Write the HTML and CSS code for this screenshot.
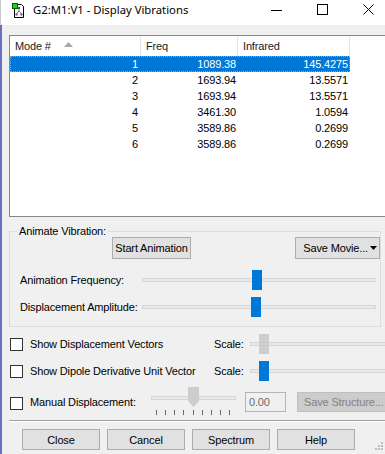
FILE: index.html
```html
<!DOCTYPE html>
<html>
<head>
<meta charset="utf-8">
<link rel="stylesheet" href="styles.css">
</head>
<body>
<div class="window">
  <div class="titlebar">
    <svg class="appicon" width="14" height="17" viewBox="0 0 14 17">
      <path d="M3.5 2.5 H10.5 L12.5 4.5 V15.5 H3.5 Z" fill="#fff" stroke="#000"/>
      <path d="M8 6 V9 M8 9 L5.5 12 M8 9 L10.5 12" stroke="#7a7a7a" stroke-width="1" fill="none"/>
      <rect x="7" y="5" width="2" height="2" fill="#555"/>
      <rect x="4.5" y="11.5" width="2" height="2" fill="#555"/>
      <rect x="9.5" y="11.5" width="2" height="2" fill="#555"/>
      <rect x="1.5" y="1.5" width="5" height="5" fill="#19d219" stroke="#0a5a0a"/>
    </svg>
    <span class="title">G2:M1:V1 - Display Vibrations</span>
    <div class="caption">
      <div class="cbtn"><svg width="11" height="11" viewBox="0 0 11 11"><path d="M0 6.5 H11" stroke="#000"/></svg></div>
      <div class="cbtn"><svg width="11" height="11" viewBox="0 0 11 11"><rect x="0.5" y="0.5" width="10" height="10" fill="none" stroke="#000"/></svg></div>
      <div class="cbtn"><svg width="11" height="11" viewBox="0 0 11 11"><path d="M0.5 0.5 L10.5 10.5 M10.5 0.5 L0.5 10.5" stroke="#000"/></svg></div>
    </div>
  </div>

  <div class="client">
    <div class="listview">
      <div class="lv-header">
        <div class="hcell c1">Mode #<svg class="sortarrow" width="9" height="5" viewBox="0 0 9 5"><path d="M0 5 L4.5 0 L9 5 Z" fill="#a8a8a8"/></svg></div>
        <div class="hcell c2">Freq</div>
        <div class="hcell c3">Infrared</div>
      </div>
      <div class="lv-row selected"><span class="c1">1</span><span class="c2">1089.38</span><span class="c3">145.4275</span></div>
      <div class="lv-row"><span class="c1">2</span><span class="c2">1693.94</span><span class="c3">13.5571</span></div>
      <div class="lv-row"><span class="c1">3</span><span class="c2">1693.94</span><span class="c3">13.5571</span></div>
      <div class="lv-row"><span class="c1">4</span><span class="c2">3461.30</span><span class="c3">1.0594</span></div>
      <div class="lv-row"><span class="c1">5</span><span class="c2">3589.86</span><span class="c3">0.2699</span></div>
      <div class="lv-row"><span class="c1">6</span><span class="c2">3589.86</span><span class="c3">0.2699</span></div>
    </div>

    <fieldset class="group">
      <legend>Animate Vibration:</legend>
      <div class="grp-buttons">
        <button class="btn btn-start">Start Animation</button>
        <button class="btn btn-movie">Save Movie...<svg class="dd" width="7" height="4" viewBox="0 0 7 4"><path d="M0 0 H7 L3.5 4 Z" fill="#000"/></svg></button>
      </div>
      <div class="slider-row">
        <span class="slider-label">Animation Frequency:</span>
        <div class="slider wide"><div class="track"></div><div class="thumb" style="left:110px"></div></div>
      </div>
      <div class="slider-row second">
        <span class="slider-label">Displacement Amplitude:</span>
        <div class="slider wide"><div class="track"></div><div class="thumb" style="left:109px"></div></div>
      </div>
    </fieldset>

    <div class="opt-row first">
      <div class="checkbox"></div>
      <span>Show Displacement Vectors</span>
      <span>Scale:</span>
      <div class="slider scale"><div class="track"></div><div class="thumb grey" style="left:9px"></div></div>
    </div>
    <div class="opt-row">
      <div class="checkbox"></div>
      <span>Show Dipole Derivative Unit Vector</span>
      <span>Scale:</span>
      <div class="slider scale"><div class="track"></div><div class="thumb" style="left:9px"></div></div>
    </div>

    <div class="manual-row">
      <div class="checkbox m-check"></div>
      <span class="m-label">Manual Displacement:</span>
      <div class="tickslider">
        <div class="ts-track"></div>
        <div class="ticks"><i></i><i></i><i></i><i></i><i></i><i></i><i></i><i></i><i></i></div>
        <svg class="ts-thumb" style="left:37px" width="11" height="20" viewBox="0 0 11 20"><path d="M0 0 H11 V14 L5.5 20 L0 14 Z" fill="#cdcdcd"/></svg>
      </div>
      <div class="textbox">0.00</div>
      <button class="btn btn-disabled">Save Structure...</button>
    </div>

    <div class="separator"></div>

    <div class="bottom-buttons">
      <button class="btn btn-bottom">Close</button>
      <button class="btn btn-bottom">Cancel</button>
      <button class="btn btn-bottom">Spectrum</button>
      <button class="btn btn-bottom">Help</button>
    </div>

    <svg class="grip" width="9" height="9" viewBox="0 0 9 9">
      <rect x="6" y="0" width="2" height="2" fill="#bcbcbc"/>
      <rect x="3" y="3" width="2" height="2" fill="#bcbcbc"/>
      <rect x="6" y="3" width="2" height="2" fill="#bcbcbc"/>
      <rect x="0" y="6" width="2" height="2" fill="#bcbcbc"/>
      <rect x="3" y="6" width="2" height="2" fill="#bcbcbc"/>
      <rect x="6" y="6" width="2" height="2" fill="#bcbcbc"/>
    </svg>
  </div>
</div>
</body>
</html>
```

FILE: styles.css
```css
* { box-sizing: border-box; }
html, body { margin: 0; padding: 0; }
body {
  width: 385px;
  height: 454px;
  overflow: hidden;
  background: #f0f0f0;
  font-family: "Liberation Sans", Arial, sans-serif;
  font-size: 11px;
  letter-spacing: -0.15px;
  color: #000;
}
.window {
  width: 385px;
  height: 454px;
  display: flex;
  flex-direction: column;
  overflow: hidden;
}

/* title bar */
.titlebar {
  height: 25px;
  flex: none;
  background: #fff;
  display: flex;
  align-items: flex-start;
  border-left: 1px solid #c8c8c8;
}
.appicon {
  margin: 2px 0 0 10px;
  flex: none;
}
.title {
  margin: 2px 0 0 8px;
  font-family: "Noto Sans", "Open Sans", sans-serif;
  font-size: 11.3px;
  letter-spacing: 0;
  line-height: 16px;
  color: #000;
  white-space: nowrap;
}
.caption {
  margin-left: auto;
  margin-right: -6px;
  display: flex;
}
.cbtn {
  width: 46px;
  height: 25px;
  display: flex;
  justify-content: center;
  padding-top: 4px;
}

/* client area */
.client {
  flex: 1;
  position: relative;
  border-left: 2px solid #6a6fc0;
  overflow: hidden;
}

/* list view */
.listview {
  margin: 10px 0 0 7px;
  width: 400px;
  height: 182px;
  border: 1px solid #828790;
  background: #fff;
}
.lv-header {
  display: flex;
  height: 20px;
}
.hcell {
  display: flex;
  align-items: center;
  padding-left: 5px;
  border-right: 1px solid #e5e5e5;
  color: #1a1a1a;
}
.c1 { width: 131px; }
.c2 { width: 97px; }
.c3 { width: 112px; }
.sortarrow { margin-left: 13px; margin-top: -3px; }
.lv-row {
  display: flex;
  height: 16px;
  line-height: 16px;
  width: 340px;
}
.lv-row span {
  text-align: right;
  padding-right: 2px;
}
.lv-row span.c1 { padding-right: 3px; }
.lv-row.selected {
  background: #0078d7;
  color: #fff;
  outline: 1px dotted #ff8a2a;
  outline-offset: -1px;
}

/* group box */
.group {
  margin: 8px 0 0 7px;
  width: 372px;
  min-width: 0;
  border: 1px solid #dcdcdc;
  padding: 0 0 9px 0;
}
.group legend {
  margin-left: 7px;
  padding: 0 2px;
  line-height: 13px;
}
.grp-buttons {
  display: flex;
  justify-content: space-between;
  padding-left: 102px;
  margin-top: -1px;
}
.btn {
  font: inherit;
  letter-spacing: inherit;
  color: #000;
  background: #e1e1e1;
  border: 1px solid #adadad;
  padding: 0;
  margin: 0;
  border-radius: 0;
  white-space: nowrap;
}
.btn-start { width: 79px; height: 22px; }
.btn-movie {
  width: 85px;
  height: 22px;
  display: flex;
  align-items: center;
  justify-content: flex-end;
  padding-right: 2px;
}
.btn-movie .dd { margin-left: 2px; }

.slider-row {
  display: flex;
  align-items: center;
  height: 20px;
  margin-top: 11px;
}
.slider-row.second { margin-top: 7px; }
.slider-label {
  width: 132px;
  padding-left: 10px;
}
.slider {
  position: relative;
  height: 20px;
  display: flex;
  align-items: center;
}
.slider.wide { width: 234px; }
.slider.scale { width: 160px; }
.track {
  width: 100%;
  height: 4px;
  background: #e7eaea;
  border: 1px solid #d6d6d6;
}
.thumb {
  position: absolute;
  top: 0;
  width: 10px;
  height: 20px;
  background: #0078d7;
}
.thumb.grey { background: #cdcdcd; }

/* option rows */
.opt-row {
  display: grid;
  grid-template-columns: 20px 184px 36px 1fr;
  align-items: center;
  height: 20px;
  margin: 7px 0 0 8px;
}
.checkbox {
  width: 13px;
  height: 13px;
  border: 1px solid #333;
  background: #fff;
}

.manual-row {
  display: flex;
  align-items: flex-start;
  margin: 5px 0 0 8px;
}
.m-check { margin-top: 11px; margin-right: 7px; flex: none; }
.m-label {
  width: 121px;
  margin-top: 10px;
  line-height: 13px;
  flex: none;
}
.tickslider {
  position: relative;
  width: 85px;
  height: 28px;
  margin-top: 1px;
  flex: none;
}
.ts-track {
  margin-top: 9px;
  height: 4px;
  background: #e7eaea;
  border: 1px solid #d6d6d6;
}
.ticks {
  margin-top: 10px;
  height: 5px;
  display: flex;
  justify-content: space-between;
  padding: 0 6px 0 5px;
}
.ticks i {
  display: block;
  width: 1px;
  height: 5px;
  background: #6a6a6a;
}
.ts-thumb {
  position: absolute;
  top: 0;
}
.textbox {
  flex: none;
  width: 41px;
  height: 20px;
  margin: 6px 0 0 9px;
  border: 1px solid #b4b4b4;
  background: #f0f0f0;
  color: #6d6d6d;
  padding-left: 3px;
  line-height: 18px;
}
.btn-disabled {
  flex: none;
  width: 100px;
  height: 20px;
  margin: 6px 0 0 11px;
  background: #cccccc;
  border-color: #bfbfbf;
  color: #838383;
  text-align: left;
  padding-left: 6px;
}

.separator {
  margin: 5px 0 0 7px;
  border-top: 1px solid #a0a0a0;
  border-bottom: 1px solid #fff;
}
.bottom-buttons {
  display: flex;
  gap: 7px;
  padding-left: 20px;
  margin-top: 7px;
}
.btn-bottom { width: 78px; height: 21px; }

.grip {
  position: absolute;
  right: 1px;
  bottom: 3px;
}
```
